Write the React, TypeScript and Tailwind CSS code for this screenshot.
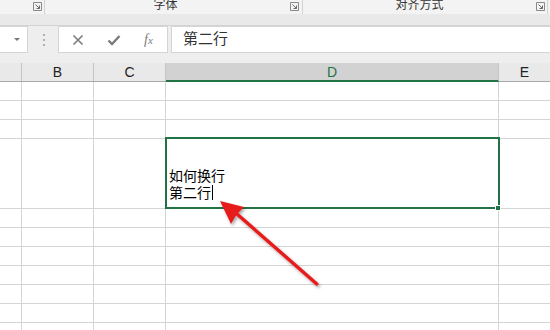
import React from 'react';

const grid = 'border-[#d4d4d4]';

function Launcher() {
  return (
    <svg width="9" height="9" viewBox="0 0 9 9" className="shrink-0">
      <path d="M0.5 0.5h8v8h-8z" fill="none" stroke="#8a8a8a" />
      <path d="M2.5 2.5l4 4M6.5 3.5v3h-3" fill="none" stroke="#6a6a6a" />
    </svg>
  );
}

function Arrow() {
  return (
    <svg className="absolute left-0 top-0 pointer-events-none" width="550" height="330">
      <defs>
        <filter id="sh" x="-20%" y="-20%" width="140%" height="140%">
          <feDropShadow dx="1.5" dy="2" stdDeviation="1.6" floodColor="#000" floodOpacity="0.35" />
        </filter>
      </defs>
      <g filter="url(#sh)" fill="#e61b1b">
        <path d="M316.8 284 L237 214" stroke="#e61b1b" strokeWidth="3.4" strokeLinecap="round" />
        <polygon points="220,201 244,207 236.5,214.5 231,224" />
      </g>
    </svg>
  );
}

export default function App() {
  const rowHeights = [19, 19, 19, 70, 19, 19, 19, 19, 19, 19, 19, 19];

  return (
    <div
      className="relative w-[550px] h-[330px] overflow-hidden bg-white"
      style={{ fontFamily: '"Liberation Sans", "Noto Sans CJK SC", sans-serif' }}
    >
      {/* Ribbon group labels */}
      <div className="flex h-[14px] bg-[#f3f3f3] overflow-hidden text-[12px] text-[#333]">
        <div className="w-[45px] flex justify-end items-start pt-[2px] pr-[2px] border-r border-[#d2d2d2]">
          <Launcher />
        </div>
        <div className="w-[258px] flex items-start border-r border-[#d2d2d2]">
          <div className="flex-1 text-center leading-[12px] -mt-[1px] pr-[4px]">字体</div>
          <div className="pt-[2px] pr-[3px]">
            <Launcher />
          </div>
        </div>
        <div className="w-[245px] flex items-start border-r border-[#d2d2d2]">
          <div className="flex-1 text-center leading-[12px] -mt-[1px]">对齐方式</div>
          <div className="pt-[2px] pr-[2px]">
            <Launcher />
          </div>
        </div>
      </div>
      <div className="h-[12px] bg-[#e9e9e9] border-b border-[#d3d3d3]" />

      {/* Formula bar */}
      <div className="h-[37px] bg-[#eeeeee] flex items-start">
        <div className="w-[28px] h-[27px] bg-white border border-l-0 border-[#d4d4d4] flex items-center justify-end pr-[7px]">
          <div className="w-0 h-0 border-l-[3px] border-r-[3px] border-t-[3px] border-l-transparent border-r-transparent border-t-[#777]" />
        </div>
        <div className="w-[30px] h-[27px] flex flex-col items-center justify-center gap-[3px] pl-[2px]">
          <div className="w-[2px] h-[2px] bg-[#b0b0b0]" />
          <div className="w-[2px] h-[2px] bg-[#b0b0b0]" />
          <div className="w-[2px] h-[2px] bg-[#b0b0b0]" />
        </div>
        <div className="w-[110px] h-[27px] bg-white border border-[#d4d4d4] flex items-center text-[#7b7b7b]">
          <svg width="12" height="12" viewBox="0 0 12 12" className="ml-[13px]">
            <path d="M1.5 1.5l9 9M10.5 1.5l-9 9" stroke="#7b7b7b" strokeWidth="1.6" />
          </svg>
          <svg width="14" height="12" viewBox="0 0 14 12" className="ml-[23px]">
            <path d="M1.5 6.5l3.5 3.5 7.5-8" fill="none" stroke="#7b7b7b" strokeWidth="2.4" />
          </svg>
          <span
            className="ml-[23px] italic text-[14px] leading-none"
            style={{ fontFamily: '"Liberation Serif", serif' }}
          >
            f<span className="text-[11px]">x</span>
          </span>
        </div>
        <div className="ml-[3px] flex-1 h-[27px] bg-white border border-r-0 border-[#d4d4d4] flex items-center pl-[11px] text-[15px] text-[#333]">
          第二行
        </div>
      </div>

      {/* Column headers */}
      <div className="flex h-[19px] bg-[#e9e9e9] border-b border-[#a9a9a9] text-[14px] text-[#222] leading-[18px]">
        <div className="w-[22px] border-r border-[#c4c4c4]" />
        <div className="w-[72px] border-r border-[#c4c4c4] text-center">B</div>
        <div className="w-[72px] border-r border-[#c4c4c4] text-center">C</div>
        <div className="w-[333px] -mb-[1px] bg-[#d2d2d2] border-r border-[#c4c4c4] border-b-2 border-b-[#217346] text-center text-[#217346]">
          D
        </div>
        <div className="flex-1 text-center">E</div>
      </div>

      {/* Grid */}
      <div>
        {rowHeights.map((h, i) => (
          <div key={i} className="flex" style={{ height: h }}>
            <div className={`w-[22px] border-r border-b ${grid}`} />
            <div className={`w-[72px] border-r border-b ${grid}`} />
            <div className={`w-[72px] border-r border-b ${grid}`} />
            {i === 3 ? (
              <div className={`relative w-[333px] border-r border-b ${grid}`}>
                <div
                  className="absolute left-[3px] bottom-[7px] text-[14px] leading-[17px] text-black"
                  style={{ fontFamily: '"Noto Sans CJK SC", sans-serif' }}
                >
                  <div>如何换行</div>
                  <div className="flex items-center">
                    <span>第二行</span>
                    <span className="ml-[1px] inline-block w-px h-[15px] bg-black" />
                  </div>
                </div>
                <div className="absolute -left-[1px] -top-[2px] w-[335px] h-[72px] border-2 border-[#217346]" />
                <div className="absolute -right-[3px] -bottom-[3px] w-[6px] h-[6px] bg-[#217346] border border-white" />
              </div>
            ) : (
              <div className={`w-[333px] border-r border-b ${grid}`} />
            )}
            <div className={`flex-1 border-b ${grid}`} />
          </div>
        ))}
      </div>

      <Arrow />
    </div>
  );
}
